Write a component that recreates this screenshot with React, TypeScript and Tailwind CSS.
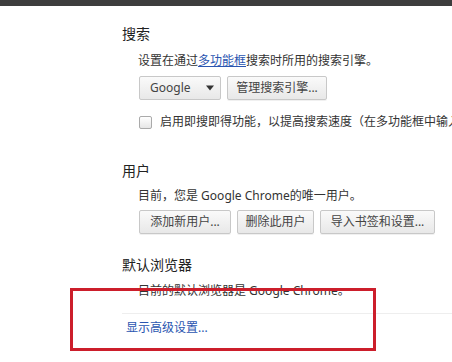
import React from "react";

const font = { fontFamily: '"Noto Sans", "Noto Sans CJK SC", sans-serif' };

function Btn({ label, w }: { label: string; w: string }) {
  return (
    <button
      className={`${w} h-[24px] shrink-0 rounded-[2px] border border-[#c8c8c8] bg-gradient-to-b from-[#fafafa] to-[#e8e8e8] text-[12px] text-[#444] shadow-[0_1px_0_rgba(0,0,0,0.06)]`}
    >
      {label}
    </button>
  );
}

export default function App() {
  return (
    <div className="relative h-[362px] w-[452px] overflow-hidden bg-white" style={font}>
      <div className="h-[6px] bg-[#3d3d3d]" />

      <div className="pl-[122px]">
        {/* 搜索 */}
        <div className="mt-[18px] h-[20px] text-[14px] leading-[20px] text-[#222]">搜索</div>
        <div className="mt-[9px] pl-[16px]">
          <div className="h-[16px] text-[12px] leading-[16px] text-[#333]">
            设置在通过<span className="text-[#2a55b0] underline">多功能框</span>搜索时所用的搜索引擎。
          </div>
          <div className="mt-[7px] flex gap-[6px] pl-px">
            <div className="flex h-[24px] w-[82px] items-center justify-between rounded-[2px] border border-[#c8c8c8] bg-gradient-to-b from-[#fafafa] to-[#e8e8e8] pl-[10px] pr-[5px] text-[12px] text-[#444]">
              <span>Google</span>
              <svg width="10" height="6" viewBox="0 0 10 6">
                <path d="M1 0.5h8L5 5.5z" fill="#333" />
              </svg>
            </div>
            <Btn label="管理搜索引擎..." w="w-[100px]" />
          </div>
          <div className="mt-[14px] flex h-[16px] items-center gap-[8px] whitespace-nowrap pl-px text-[12px] leading-[16px] text-[#333]">
            <span className="h-[13px] w-[13px] shrink-0 rounded-[2px] border border-[#aaa] bg-gradient-to-b from-white to-[#e6e6e6]" />
            <span>启用即搜即得功能，以提高搜索速度（在多功能框中输入网址时显示）</span>
          </div>
        </div>

        {/* 用户 */}
        <div className="mt-[31px] h-[20px] text-[14px] leading-[20px] text-[#222]">用户</div>
        <div className="mt-[7px] pl-[16px]">
          <div className="h-[16px] text-[12px] leading-[16px] text-[#333]">目前，您是 Google Chrome的唯一用户。</div>
          <div className="mt-[6px] flex gap-[6px] pl-px">
            <Btn label="添加新用户..." w="w-[92px]" />
            <Btn label="删除此用户" w="w-[77px]" />
            <Btn label="导入书签和设置..." w="w-[115px]" />
          </div>
        </div>

        {/* 默认浏览器 */}
        <div className="mt-[21px] h-[20px] text-[14px] leading-[20px] text-[#222]">默认浏览器</div>
        <div className="mt-[8px] pl-[16px]">
          <div className="h-[16px] text-[12px] leading-[16px] text-[#333]">目前的默认浏览器是 Google Chrome。</div>
        </div>
        <div className="mt-[14px] h-px bg-[#eeeeee]" />
        <div className="mt-[6px] h-[16px] pl-[4px] text-[12px] leading-[16px] text-[#2a55b0]">显示高级设置...</div>
      </div>

      <div className="absolute left-[70px] top-[288px] h-[63px] w-[306px] border-[3px] border-[#cc1e2b]" />
    </div>
  );
}
